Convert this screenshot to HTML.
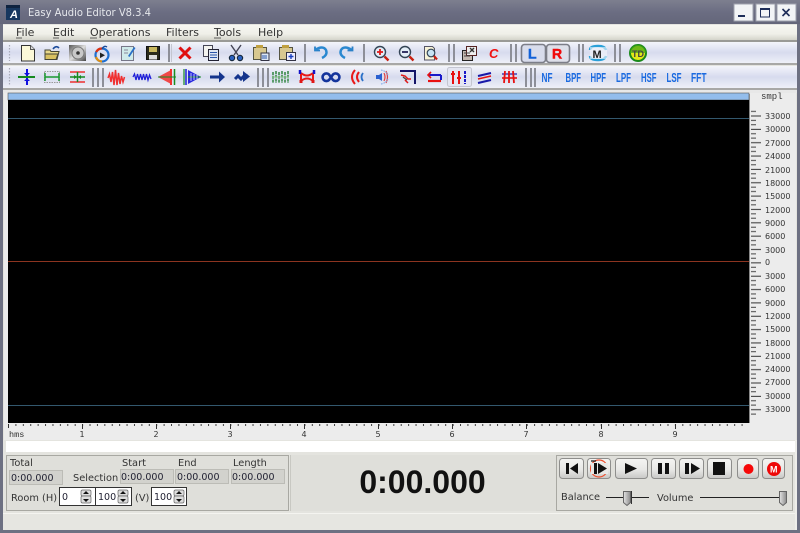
<!DOCTYPE html>
<html><head><meta charset="utf-8"><style>
html,body{margin:0;padding:0;background:#6d7082;width:800px;height:533px;overflow:hidden}
svg{display:block;filter:blur(.3px)}
text{font-family:"DejaVu Sans","Liberation Sans",sans-serif;font-size:10px;fill:#222}
.m{font-size:11px;fill:#333}
.r{font-size:8px;fill:#333}
.p{font-size:9.8px;fill:#333}
.n{font-size:9.5px;fill:#223}
.f{font-family:"Liberation Sans",sans-serif;font-size:13px;font-weight:bold;fill:#1a6ae0}
</style></head><body>
<svg width="800" height="533" viewBox="0 0 800 533" xmlns="http://www.w3.org/2000/svg">
<defs>
<linearGradient id="tt" x1="0" y1="0" x2="0" y2="1"><stop offset="0" stop-color="#7d7f8e"/><stop offset=".5" stop-color="#6b6d82"/><stop offset="1" stop-color="#64667a"/></linearGradient>
<linearGradient id="mn" x1="0" y1="0" x2="0" y2="1"><stop offset="0" stop-color="#f7f7f2"/><stop offset=".6" stop-color="#efefe8"/><stop offset="1" stop-color="#d4d4ca"/></linearGradient>
<linearGradient id="tb" x1="0" y1="0" x2="0" y2="1"><stop offset="0" stop-color="#f4f5fb"/><stop offset=".5" stop-color="#d7dbee"/><stop offset="1" stop-color="#eef0f8"/></linearGradient>
<linearGradient id="bt" x1="0" y1="0" x2="0" y2="1"><stop offset="0" stop-color="#f4f4f2"/><stop offset=".55" stop-color="#e8e8e6"/><stop offset="1" stop-color="#c8c8c6"/></linearGradient>
<linearGradient id="th" x1="0" y1="0" x2="1" y2="0"><stop offset="0" stop-color="#e4e4e4"/><stop offset="1" stop-color="#8a8a8a"/></linearGradient>
<pattern id="vt" x="750" y="109.7" width="14" height="13.35" patternUnits="userSpaceOnUse"><rect x="1" y="1.2" width="5" height="1" fill="#444"/><rect x="1" y="5.8" width="10" height="1" fill="#333"/><rect x="1" y="10.2" width="5" height="1" fill="#444"/></pattern>
<pattern id="ht" x="8" y="423" width="7.41" height="6" patternUnits="userSpaceOnUse"><rect x="0" y="1" width="1" height="2" fill="#444"/></pattern>
<linearGradient id="cd" x1="0" y1="0" x2="1" y2="1"><stop offset="0" stop-color="#555"/><stop offset=".5" stop-color="#ddd"/><stop offset="1" stop-color="#444"/></linearGradient>
</defs>

<!-- frame -->
<rect width="800" height="533" fill="#6d7082"/>
<rect width="800" height="24" fill="url(#tt)"/>
<rect x="3" y="24" width="794" height="506" fill="#e4e4df"/>

<!-- title -->
<rect x="6" y="5" width="14" height="15" fill="#17375f"/>
<rect x="6" y="5" width="14" height="3" fill="#0f2340"/>
<text x="10" y="18" style="font:italic bold 11px 'Liberation Sans',sans-serif;fill:#fff">A</text>
<text x="28" y="16" textLength="123" lengthAdjust="spacingAndGlyphs" style="font-size:10.5px;fill:#e6e8ec">Easy Audio Editor V8.3.4</text>
<g>
<rect x="734" y="4" width="19" height="17" fill="#f2f4f6" stroke="#9fa2ae"/><rect x="738" y="15" width="7" height="2" fill="#1e2e5a"/>
<rect x="756" y="4" width="19" height="17" fill="#f2f4f6" stroke="#9fa2ae"/><rect x="760.500" y="8.500" width="9" height="8.500" fill="none" stroke="#1e2e5a"/><rect x="760" y="8" width="10" height="2" fill="#1e2e5a"/>
<rect x="777" y="4" width="19" height="17" fill="#f2f4f6" stroke="#9fa2ae"/><path d="M782.500 9 l7 7 M789.500 9 l-7 7" stroke="#1e2e5a" stroke-width="1.600"/>
</g>

<!-- menu -->
<rect x="3" y="25" width="794" height="15" fill="url(#mn)"/>
<text class="m" x="16" y="36">File</text>
<text class="m" x="53" y="36">Edit</text>
<text class="m" x="90" y="36">Operations</text>
<text class="m" x="166" y="36">Filters</text>
<text class="m" x="214" y="36">Tools</text>
<text class="m" x="258" y="36">Help</text>
<path d="M16 38h6M53 38h6M90 38h7M214 38h7" stroke="#333" stroke-width=".8"/>

<!-- toolbars -->
<rect x="3" y="40" width="794" height="2" fill="#9a9a96"/>
<rect x="3" y="42" width="794" height="21" fill="url(#tb)"/>
<rect x="3" y="63" width="794" height="2" fill="#a8a8a6"/>
<rect x="3" y="66" width="794" height="22" fill="url(#tb)"/>
<rect x="3" y="88" width="794" height="2" fill="#a8a8a6"/>
<rect x="3" y="90" width="794" height="3" fill="#e8e8e8"/>
<path d="M9.500 45v16M9.500 68v18" stroke="#a8aab8" stroke-width="1.200" stroke-dasharray="1.500 1.500"/>

<!-- separators tb1 -->
<g fill="#8d8f98">
<rect x="168" y="44" width="2" height="18"/><rect x="171" y="44" width="1" height="18" fill="#c4c6d0"/>
<rect x="304" y="44" width="2" height="18"/>
<rect x="363" y="44" width="2" height="18"/>
<rect x="448" y="44" width="2" height="18"/><rect x="453" y="44" width="2" height="18"/>
<rect x="510" y="44" width="2" height="18"/><rect x="515" y="44" width="2" height="18"/>
<rect x="578" y="44" width="2" height="18"/><rect x="582" y="44" width="2" height="18"/>
<rect x="614" y="44" width="2" height="18"/><rect x="619" y="44" width="2" height="18"/>
<!-- tb2 -->
<rect x="92" y="68" width="2" height="19"/><rect x="97" y="68" width="2" height="19"/><rect x="102" y="68" width="2" height="19"/>
<rect x="257" y="68" width="2" height="19"/><rect x="262" y="68" width="2" height="19"/><rect x="267" y="68" width="2" height="19"/>
<rect x="525" y="68" width="2" height="19"/><rect x="530" y="68" width="2" height="19"/><rect x="534" y="68" width="2" height="19"/>
</g>

<!-- tb1 icons -->
<path d="M21.500 45.500h9l4 4v11.500h-13z" fill="#fbf8d8" stroke="#333"/><path d="M30.500 45.500v4h4" fill="#ddd" stroke="#555"/>
<path d="M45 50h5l1 1.500h8l-2 8h-12z" fill="#e8d888" stroke="#443"/><path d="M45 54h13l-2 5.500h-11z" fill="#d8c060" stroke="#443"/><path d="M53 49q3-4 6-1" fill="none" stroke="#1a4a9a" stroke-width="1.600"/>
<rect x="69" y="45" width="17" height="16" fill="url(#cd)"/><circle cx="78" cy="53" r="6" fill="#c8c8c8" stroke="#777"/><circle cx="78" cy="53" r="1.800" fill="#333"/>
<circle cx="102" cy="55" r="6.500" fill="none" stroke="#1f6fd0" stroke-width="2.200"/><path d="M96.200 52a6.500 6.500 0 0 1 6-3.500" fill="none" stroke="#e03010" stroke-width="2.200"/><path d="M96 57a6.500 6.500 0 0 0 6 4.500" fill="none" stroke="#e09010" stroke-width="2.200"/><path d="M100 52.500l5 2.800-5 2.800z" fill="#222"/><path d="M102 49q2-4 5-2" fill="none" stroke="#1a4a9a" stroke-width="1.400"/>
<rect x="121.500" y="46.500" width="12" height="14" fill="#cfeaea" stroke="#778"/><path d="M128 56l6-9 1.500 1-6 9z" fill="#2a70c8"/><path d="M124 50h4M124 53h4" stroke="#889" stroke-width="1"/>
<rect x="146.500" y="46.500" width="13" height="13" fill="#2a2a1a" stroke="#111"/><rect x="149" y="47" width="8" height="5" fill="#c8b860"/><rect x="149" y="55" width="8" height="4.500" fill="#ddd"/>
<path d="M179.500 47.500l11 11M190.500 47.500l-11 11" stroke="#e01010" stroke-width="3"/>
<rect x="203.500" y="45.500" width="9" height="11" fill="#f4f4f0" stroke="#445"/><rect x="208.500" y="49.500" width="10" height="11" fill="#dde6f4" stroke="#223"/><path d="M210 52.500h7M210 55h7M210 57.500h7" stroke="#2a55aa"/>
<path d="M231 45l7 10M241 45l-7 10" stroke="#445" stroke-width="1.400"/><circle cx="232" cy="58" r="2.700" fill="#2a60c0" stroke="#123"/><circle cx="240" cy="58" r="2.700" fill="#2a60c0" stroke="#123"/>
<rect x="253.500" y="47.500" width="13" height="12" fill="#d8c890" stroke="#554"/><rect x="256" y="45" width="7" height="3" fill="#c0a040"/><rect x="261" y="53" width="8" height="7.500" fill="#dde6f4" stroke="#334"/><path d="M262 56h5M262 58h5" stroke="#2a55aa"/>
<rect x="279.500" y="47.500" width="13" height="12" fill="#d8c890" stroke="#554"/><rect x="282" y="45" width="7" height="3" fill="#c0a040"/><rect x="286.500" y="52.500" width="9" height="8" fill="#eef" stroke="#334"/><path d="M291 54v5M288.500 56.500h5" stroke="#1a40c0" stroke-width="1.400"/>
<path d="M315 46.500v4h5" fill="none" stroke="#2a80c8" stroke-width="1.800"/><path d="M315 50q8-5 11 0q2 5-4 8" fill="none" stroke="#2a88d0" stroke-width="2.400"/>
<path d="M352 50q-8-5-11 0q-2 5 4 8" fill="none" stroke="#2a88d0" stroke-width="2.400"/><path d="M352.500 46.500v4h-5" fill="none" stroke="#2a80c8" stroke-width="1.800"/>
<circle cx="380" cy="52" r="5.500" fill="#e4eef8" stroke="#345" stroke-width="1.400"/><path d="M377 52h6M380 49v6" stroke="#e01818" stroke-width="1.800"/><path d="M384.500 56.500l4 4" stroke="#c82010" stroke-width="2.400"/>
<circle cx="405" cy="52" r="5.500" fill="#e4eef8" stroke="#345" stroke-width="1.400"/><path d="M402 52h6" stroke="#225" stroke-width="1.800"/><path d="M409.500 56.500l4 4" stroke="#c82010" stroke-width="2.400"/>
<path d="M424.500 46.500h8l2 2v11.500h-10z" fill="#f8f4d8" stroke="#556"/><circle cx="431" cy="53" r="3.800" fill="#c8e4f4" stroke="#345" stroke-width="1.200"/><path d="M434 56l3 3.500" stroke="#c82010" stroke-width="2.200"/>
<rect x="462.500" y="50.500" width="10" height="10" fill="#c4b8b0" stroke="#222"/><rect x="466.500" y="46.500" width="10" height="9" fill="#eee" stroke="#522"/><path d="M470 48l4 4M474 48l-4 4" stroke="#333" stroke-width="1.400"/><path d="M464 53h6M464 56h6" stroke="#444"/>
<text x="489" y="58" style="font:italic bold 13px 'Liberation Sans',sans-serif;fill:#f01010">C</text>
<rect x="521.500" y="44.500" width="24" height="18" rx="3" fill="#d8dcec" stroke="#7c7e88" stroke-width="1.600"/>
<text x="528" y="58.500" style="font:bold 14px 'Liberation Sans',sans-serif;fill:#1060d8;stroke:#1060d8;stroke-width:.5">L</text>
<rect x="546.500" y="44.500" width="23" height="18" rx="3" fill="#dee0ea" stroke="#7c7e88" stroke-width="1.600"/>
<text x="552" y="58.500" style="font:bold 14px 'Liberation Sans',sans-serif;fill:#f00a0a;stroke:#f00a0a;stroke-width:.5">R</text>
<path d="M590 50q0-4 8-4q7 0 8 4M590 56q0 4 8 4q7 0 8-4" fill="none" stroke="#2aa0d8" stroke-width="2.400"/><rect x="590" y="47" width="17" height="12" fill="#f4f6fb" opacity=".6"/><text x="592.500" y="58" style="font:bold 11px 'Liberation Sans',sans-serif;fill:#222">M</text>
<circle cx="638" cy="53" r="8" fill="#e4e818" stroke="#1a8a1a" stroke-width="2"/><path d="M630 53a8 8 0 0 1 16 0z" fill="#48a818" opacity=".75"/><text x="632" y="57" style="font:bold 9px 'Liberation Sans',sans-serif;fill:#444">TD</text>

<!-- tb2 icons -->
<path d="M27 69v16" stroke="#1010e0" stroke-width="2"/><path d="M18 77h17" stroke="#158a20" stroke-width="2"/><path d="M24 73l3 3 3-3M24 81l3-3 3 3" fill="#1010e0"/>
<rect x="44.500" y="71.500" width="15" height="11" fill="none" stroke="#999" stroke-dasharray="1.500 1"/><path d="M45 77h14M45 73v8M59 73v8" stroke="#1a9a30" stroke-width="1.500"/>
<path d="M70 72h15M70 82h15" stroke="#ee3030" stroke-width="1.500"/><path d="M70 77h15" stroke="#158a20" stroke-width="1.500"/><path d="M77.500 72v10" stroke="#158a20" stroke-width="1.500"/><path d="M74 75l3 2-3 2M81 75l-3 2 3 2" fill="#158a20"/>
<path d="M108 78l1.500-4 1.500 8 1.500-10 1.500 13 1.500-15 1.500 15 1.500-12 1.500 11 1.500-8 1.500 6 1.500-5" fill="none" stroke="#f03030" stroke-width="1.500"/>
<path d="M133 77l1.500-3 1.500 6 1.500-6 1.500 6 1.500-6 1.500 6 1.500-6 1.500 6 1.500-6 1.500 6 1.500-5 1.500 4" fill="none" stroke="#2020d8" stroke-width="1.300"/>
<path d="M158 77l13-7v14z" fill="#f04848"/><path d="M171 69v16" stroke="#f03030" stroke-width="2"/><path d="M174.500 69v16" stroke="#1a8a20" stroke-width="1.500"/><path d="M158 77h18" stroke="#158a20"/>
<path d="M184 69v16" stroke="#158a20" stroke-width="1.200"/><path d="M186 69v16" stroke="#2020d8" stroke-width="1.500"/><path d="M188 70l13 7-13 7z" fill="#2828e0"/><path d="M188 77h13" stroke="#158a20"/><path d="M191 73v8M194 74v6M197 75v4" stroke="#fff" stroke-width=".7"/>
<path d="M210 77h12" stroke="#14348c" stroke-width="3"/><path d="M219 71.500l6 5.500-6 5.500z" fill="#14348c"/>
<path d="M235 79l3-3 3 3 3-3 4 0" fill="none" stroke="#14348c" stroke-width="3"/><path d="M243 71l7 5.500-7 5.500z" fill="#14348c"/>
<path d="M273 72v11M276 71v12M279 72v11M282 71v12M285 72v11M288 71v12" stroke="#3a8a4a" stroke-width="1.600" stroke-dasharray="3 .8"/><path d="M272 77h17" stroke="#90c890"/>
<path d="M301 73q6 5 12 0M301 81q6-5 12 0M301 73v8M313 73v8" fill="none" stroke="#e81818" stroke-width="2"/><path d="M301 83l0-3M313 83l0-3" stroke="#e01818" stroke-width="3"/><path d="M300 70v4M314 70v4" stroke="#1414c8" stroke-width="2.500"/>
<path d="M329 74.500a3.800 3.800 0 1 0 0 5.500l4-5.500a3.800 3.800 0 1 1 0 5.500z" fill="none" stroke="#14349c" stroke-width="2.600"/>
<path d="M355 70q-6 7 0 14" fill="none" stroke="#e81818" stroke-width="2"/><path d="M359 72q-4 5 0 10" fill="none" stroke="#e81818" stroke-width="2"/><path d="M363 73q-3 4 0 8" fill="none" stroke="#2a70c8" stroke-width="1.800"/>
<rect x="376" y="75" width="3" height="4" fill="#2a60d0"/><path d="M379 75l3-2v8l-3-2z" fill="#2a60d0"/><path d="M384 73q2 4 0 8M386 71q3 6 0 12" fill="none" stroke="#e04040" stroke-width="1.200"/><path d="M381 70q5 1 7 5M381 84q5-1 7-5" fill="none" stroke="#7aa8e8" stroke-width="1" stroke-dasharray="1.500 1"/>
<path d="M400 71h15v13" fill="none" stroke="#141468" stroke-width="2"/><path d="M401 75l4 1 3 3 3 0M405 80l3 3" fill="none" stroke="#e01818" stroke-width="1.500"/><path d="M403 77l4 3" stroke="#444" stroke-width="1.300"/>
<path d="M428 75h13" stroke="#1818c8" stroke-width="2"/><path d="M428 81h13" stroke="#e81010" stroke-width="2.200"/><path d="M431 72l-3 3 3 3" fill="none" stroke="#e81010" stroke-width="1.600"/><path d="M441 75v5" stroke="#1818c8" stroke-width="2"/>
<rect x="447.500" y="67.500" width="24" height="19" rx="2" fill="#e4e6f2" stroke="#c4c6d0"/>
<path d="M453 71v13M459 71v13" stroke="#e81010" stroke-width="2"/><path d="M465 71v13" stroke="#1818c8" stroke-width="2" stroke-dasharray="3 1"/><path d="M451 74h4M457 78h4" stroke="#e81010" stroke-width="2"/>
<path d="M478 76l13-3" stroke="#1818a8" stroke-width="2"/><path d="M478 79l13-3" stroke="#e81010" stroke-width="1.500"/><path d="M478 83l13-3" stroke="#1818a8" stroke-width="2"/>
<path d="M502 78h15" stroke="#e81010" stroke-width="1.600"/><path d="M502 74h15" stroke="#1818a8" stroke-width="1.200"/><path d="M505 71l-1 12M509 71l0 12M513 71l1 12" stroke="#e81010" stroke-width="1.800"/>
<text class="f" x="541.500" y="82" textLength="11" lengthAdjust="spacingAndGlyphs">NF</text>
<text class="f" x="565.500" y="82" textLength="15.500" lengthAdjust="spacingAndGlyphs">BPF</text>
<text class="f" x="590.500" y="82" textLength="15.500" lengthAdjust="spacingAndGlyphs">HPF</text>
<text class="f" x="616" y="82" textLength="15" lengthAdjust="spacingAndGlyphs">LPF</text>
<text class="f" x="641" y="82" textLength="15.500" lengthAdjust="spacingAndGlyphs">HSF</text>
<text class="f" x="666.500" y="82" textLength="15" lengthAdjust="spacingAndGlyphs">LSF</text>
<text class="f" x="691" y="82" textLength="15.500" lengthAdjust="spacingAndGlyphs">FFT</text>

<!-- wave area -->
<rect x="4" y="93" width="792" height="347" fill="#ececec"/>
<rect x="8" y="93" width="741" height="7" fill="#93bdec" stroke="#555" stroke-width=".6"/>
<rect x="8" y="100" width="741" height="323" fill="#000"/>
<rect x="8" y="118" width="741" height="1" fill="#33586e"/>
<rect x="8" y="261" width="741" height="1" fill="#8c3420"/>
<rect x="8" y="405" width="741" height="1" fill="#33586e"/>
<rect x="749" y="94" width="1" height="329" fill="#888"/>
<rect x="750" y="108" width="14" height="309" fill="url(#vt)"/>
<text class="r" x="761" y="99" style="font-family:'Liberation Mono',monospace;font-size:9px">smpl</text>
<g>
<text class="r" x="765" y="119">33000</text><text class="r" x="765" y="132">30000</text><text class="r" x="765" y="146">27000</text><text class="r" x="765" y="159">24000</text><text class="r" x="765" y="173">21000</text><text class="r" x="765" y="186">18000</text><text class="r" x="765" y="199">15000</text><text class="r" x="765" y="213">12000</text><text class="r" x="765" y="226">9000</text><text class="r" x="765" y="239">6000</text><text class="r" x="765" y="253">3000</text><text class="r" x="765" y="265">0</text><text class="r" x="765" y="279">3000</text><text class="r" x="765" y="292">6000</text><text class="r" x="765" y="306">9000</text><text class="r" x="765" y="319">12000</text><text class="r" x="765" y="332">15000</text><text class="r" x="765" y="346">18000</text><text class="r" x="765" y="359">21000</text><text class="r" x="765" y="372">24000</text><text class="r" x="765" y="385">27000</text><text class="r" x="765" y="399">30000</text><text class="r" x="765" y="412">33000</text>
</g>
<rect x="8" y="423" width="741" height="6" fill="url(#ht)"/>
<path d="M8.500 424v4M82.500 424v5M156.500 424v5M230.500 424v5M304.500 424v5M378.500 424v5M452.500 424v5M526.500 424v5M601.500 424v5M675.500 424v5" stroke="#333"/>
<text x="9" y="437" style="font-family:'Liberation Mono',monospace;font-size:8.500px;fill:#333">hms</text>
<text class="r" x="79.500" y="437">1</text><text class="r" x="153.500" y="437">2</text><text class="r" x="227.500" y="437">3</text><text class="r" x="301.500" y="437">4</text><text class="r" x="375.500" y="437">5</text><text class="r" x="449.500" y="437">6</text><text class="r" x="523.500" y="437">7</text><text class="r" x="598.500" y="437">8</text><text class="r" x="672.500" y="437">9</text>
<rect x="6" y="441" width="789" height="11" fill="#fff"/>

<!-- bottom panels -->
<rect x="3" y="452" width="794" height="61" fill="#e4e4df"/>
<rect x="6.500" y="455.500" width="282" height="55" fill="#dfdfda" stroke="#a8a8a2"/>
<rect x="291" y="455" width="265" height="56" fill="#dfdfda"/>
<rect x="290" y="455" width="1" height="56" fill="#c8c8c2"/>
<rect x="556.500" y="455.500" width="236" height="55" fill="#dfdfda" stroke="#a8a8a2"/>
<rect x="3" y="513" width="794" height="1" fill="#f4f4f0"/>
<rect x="3" y="514" width="794" height="16" fill="#e6e6e1"/>
<rect x="795" y="440" width="2" height="90" fill="#eeeeea"/>

<text class="p" x="10" y="466">Total</text>
<text class="p" x="122" y="466">Start</text>
<text class="p" x="178" y="466">End</text>
<text class="p" x="233" y="466">Length</text>
<text class="p" x="73" y="481">Selection</text>
<text class="p" x="11" y="501">Room (H)</text>
<text class="p" x="135" y="501">(V)</text>

<g fill="#d2d2cd" stroke="#bcbcb6">
<rect x="9.500" y="470.500" width="53" height="14"/><rect x="120.500" y="469.500" width="53" height="14"/><rect x="175.500" y="469.500" width="53" height="14"/><rect x="231.500" y="469.500" width="53" height="14"/>
</g>
<text class="n" x="11" y="481">0:00.000</text><text class="n" x="121" y="480">0:00.000</text><text class="n" x="177" y="480">0:00.000</text><text class="n" x="232" y="480">0:00.000</text>

<g fill="#fff" stroke="#333">
<rect x="59.500" y="487.500" width="36" height="18"/><rect x="95.500" y="487.500" width="36" height="18"/><rect x="151.500" y="487.500" width="35" height="18"/>
</g>
<text class="n" x="62" y="500">0</text><text class="n" x="98" y="500">100</text><text class="n" x="154" y="500">100</text>
<g fill="#ddd" stroke="#666" stroke-width=".7">
<rect x="81" y="490" width="10" height="6" rx="1.500"/><rect x="81" y="496" width="10" height="7" rx="1.500"/>
<rect x="118" y="490" width="10" height="6" rx="1.500"/><rect x="118" y="496" width="10" height="7" rx="1.500"/>
<rect x="174" y="490" width="10" height="6" rx="1.500"/><rect x="174" y="496" width="10" height="7" rx="1.500"/>
</g>
<path d="M86 491l3 3h-6zM86 502l3-3h-6zM123 491l3 3h-6zM123 502l3-3h-6zM179 491l3 3h-6zM179 502l3-3h-6z" fill="#111"/>

<text x="422.500" y="493" text-anchor="middle" style="font:bold 32px 'Liberation Sans',sans-serif;fill:#111">0:00.000</text>

<!-- transport -->
<g fill="url(#bt)" stroke="#8e8e8c">
<rect x="559.500" y="458.500" width="24" height="20" rx="3"/>
<rect x="587.500" y="458.500" width="23" height="20" rx="3"/>
<rect x="615.500" y="458.500" width="32" height="20" rx="3"/>
<rect x="651.500" y="458.500" width="24" height="20" rx="3"/>
<rect x="679.500" y="458.500" width="24" height="20" rx="3"/>
<rect x="707.500" y="458.500" width="24" height="20" rx="3"/>
<rect x="737.500" y="458.500" width="21" height="20" rx="3"/>
<rect x="762.500" y="458.500" width="22" height="20" rx="3"/>
</g>
<rect x="566" y="463" width="3" height="11" fill="#111"/><path d="M578 463v11l-8-5.500z" fill="#111"/>
<circle cx="599" cy="468.500" r="8.500" fill="none" stroke="#ee5030" stroke-width="1.200"/><rect x="591" y="463" width="17" height="11" fill="#e8e8e6"/><rect x="594" y="463" width="3" height="11" fill="#111"/><path d="M598 463l9 5.500-9 5.500z" fill="#111"/><path d="M591 461h5" stroke="#111" stroke-width="1.200"/>
<path d="M625 463l12 5.500-12 5.500z" fill="#111"/>
<rect x="658" y="463" width="4" height="11" fill="#111"/><rect x="665" y="463" width="4" height="11" fill="#111"/>
<rect x="685" y="463" width="4" height="11" fill="#111"/><path d="M691 463l9 5.500-9 5.500z" fill="#111"/>
<rect x="713" y="462" width="12" height="13" fill="#111"/>
<circle cx="748.500" cy="469" r="5" fill="#f60808"/>
<circle cx="774" cy="469" r="7" fill="#ee0808"/><text x="770" y="472.500" style="font:bold 9px 'Liberation Sans',sans-serif;fill:#fff">M</text>

<text class="p" x="561" y="500">Balance</text>
<text class="p" x="657" y="501">Volume</text>
<rect x="606" y="497" width="43" height="1" fill="#222"/>
<rect x="700" y="497" width="86" height="1" fill="#222"/>
<path d="M623.500 491.500h7v11l-3.500 3-3.500-3z" fill="url(#th)" stroke="#666"/>
<rect x="631" y="491" width="1" height="13" fill="#333"/>
<path d="M779.500 491.500h7v11l-3.500 3-3.500-3z" fill="url(#th)" stroke="#666"/>
</svg>
</body></html>
